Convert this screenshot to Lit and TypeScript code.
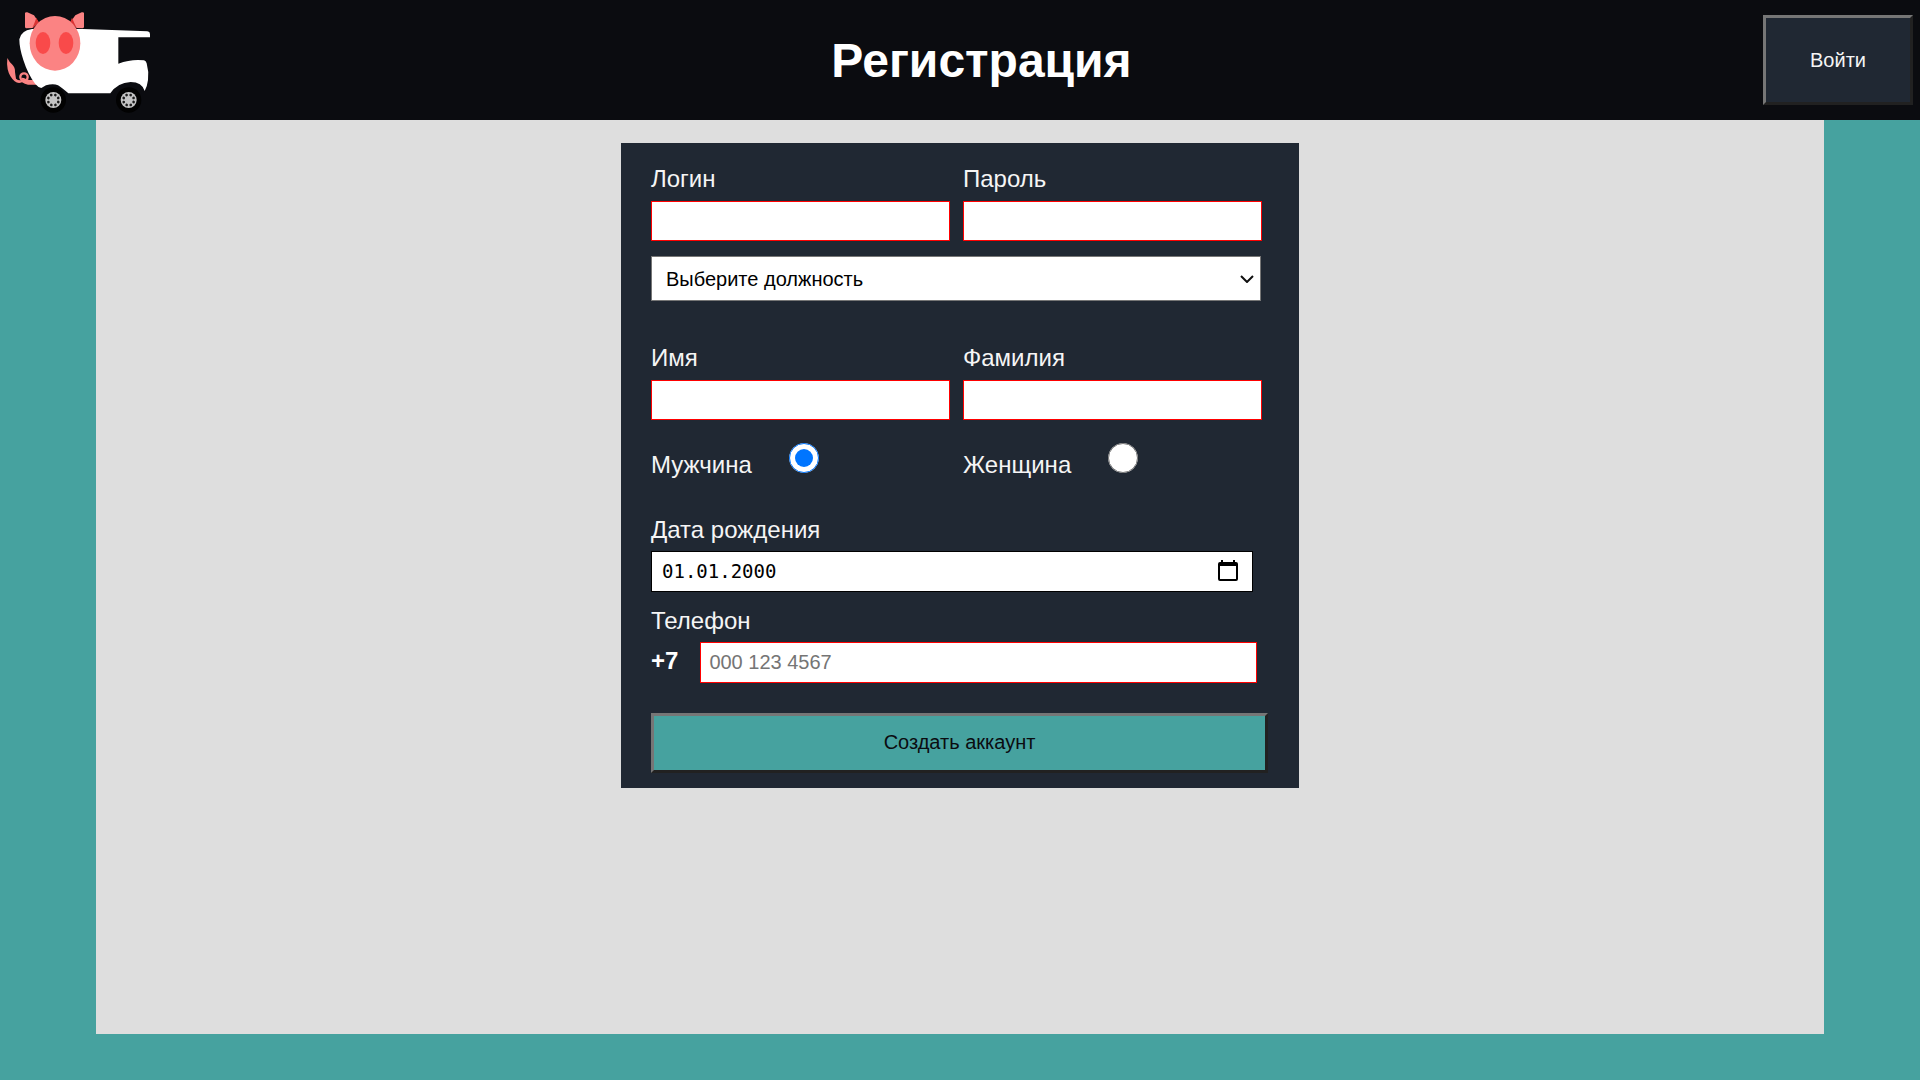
import { LitElement, html, css, svg } from "lit";
import { customElement } from "lit/decorators.js";

const wheel = (cx: number) => svg`
  <circle cx=${cx} cy="300" r="38" fill="#020202" />
  <circle cx=${cx} cy="300" r="24" fill="#c4c4c4" />
  ${[22, 67, 112, 157, 202, 247, 292, 337].map(
    (a) => svg`<circle cx=${cx} cy="284" r="4" fill="#1c1c1c"
      transform="rotate(${a} ${cx} 300)" />`
  )}`;

@customElement("pig-van-logo")
export class PigVanLogo extends LitElement {
  static styles = css`
    :host {
      display: block;
    }
    .art {
      display: block;
      width: 150px;
      height: 120px;
    }
  `;

  render() {
    return html`
      <svg class="art" viewBox="0 0 450 360" aria-hidden="true">
        <path
          d="M22 174 Q28 186 36 193 Q46 203 45 216 L48 236 Q56 243 66 240 Q78 236 88 240 L108 240 L110 254 L84 254 Q74 252 66 247 Q54 252 44 244 Q28 230 23 208 Q20 192 22 174 Z"
          fill="#fb8383"
        />
        <circle cx="72" cy="231" r="11" fill="#0b0c10" stroke="#fb8383" stroke-width="7" />
        <path d="M66 236 Q76 236 84 246" fill="none" stroke="#fb8383" stroke-width="5" />
        <path
          d="M96 87 L250 87 L442 94 Q450 95 450 102 L450 112 L355 112 L355 191 Q395 176 432 181 Q438 182 440 190 Q447 215 444 240 Q442 258 434 273 Q426 246 392 246 Q352 248 331 280 L205 280 Q184 262 174 256 Q160 249 138 256 L124 264 Q114 262 106 252 Q84 224 70 180 Q58 144 58 118 Q62 92 96 87 Z"
          fill="#ffffff"
        />
        <path d="M75 38 Q77 36 82 37 L102 46 L116 67 L98 84 L78 85 Q75 84 75 80 Z" fill="#fb8383" />
        <path d="M252 38 Q250 36 245 37 L226 46 L211 67 L230 84 L248 85 Q252 84 252 80 Z" fill="#fb8383" />
        <path d="M109 53 L117 68 L97 84 Q104 68 109 53 Z" fill="#d93434" />
        <path d="M216 53 L210 68 L230 84 Q222 68 216 53 Z" fill="#d93434" />
        <ellipse cx="165" cy="130" rx="76" ry="82" fill="#fb8383" />
        <ellipse cx="129" cy="129" rx="22" ry="33" fill="#f94a4a" />
        <ellipse cx="198" cy="129" rx="22" ry="33" fill="#f94a4a" />
        ${wheel(160)} ${wheel(386)}
      </svg>
    `;
  }
}

@customElement("app-root")
export class AppRoot extends LitElement {
  static styles = css`
    :host {
      display: flex;
      flex-direction: column;
      min-height: 100vh;
      background: #46a29f;
      font-family: "Liberation Sans", Arial, sans-serif;
      color: #f5f5f5;
    }
    *,
    *::before {
      box-sizing: border-box;
    }
    .header {
      display: flex;
      align-items: center;
      justify-content: space-between;
      height: 120px;
      padding-right: 7px;
      background: #0b0c10;
    }
    .brand {
      width: 200px;
    }
    .title {
      margin: 0;
      padding-top: 2px;
      font-size: 48px;
      line-height: 56px;
      color: #ffffff;
    }
    .button {
      border: 3px solid;
      border-color: #767676 #212121 #212121 #767676;
      border-radius: 0;
      padding: 0;
      font: 20px "Liberation Sans", Arial, sans-serif;
      cursor: pointer;
    }
    .login {
      width: 150px;
      height: 90px;
      background: #202833;
      color: #f5f5f5;
    }
    .page {
      flex: 1;
      margin: 0 5% 46px;
      padding-top: 23px;
      background: #dedede;
    }
    .form {
      display: flex;
      flex-direction: column;
      width: min(100%, 678px);
      margin: 0 auto;
      padding: 22px 31px 15px 30px;
      background: #202833;
    }
    .pair {
      display: grid;
      grid-template-columns: 1fr 1fr;
      column-gap: 13px;
      margin-right: 6px;
    }
    .field {
      display: flex;
      flex-direction: column;
      gap: 8px;
    }
    .label {
      font-size: 24px;
      line-height: 28px;
    }
    .input {
      width: 100%;
      height: 40px;
      padding: 0 8px 1px;
      border: 1px solid #ff0000;
      border-radius: 0;
      background: #ffffff;
      color: #000000;
      font: 20px "Liberation Sans", Arial, sans-serif;
    }
    .input::placeholder {
      color: #757575;
    }
    .position {
      display: grid;
      grid-template-columns: 1fr auto;
      align-items: center;
      margin: 15px 7px 43px 0;
    }
    .select {
      grid-area: 1 / 1 / 2 / 3;
      height: 45px;
      padding: 0 30px 0 14px;
      border: 1px solid #767676;
      border-radius: 0;
      appearance: none;
      background: #ffffff;
      color: #000000;
      font: 20px "Liberation Sans", Arial, sans-serif;
    }
    .chevron {
      grid-area: 1 / 2 / 2 / 3;
      width: 14px;
      height: 8px;
      margin-right: 7px;
      pointer-events: none;
    }
    .choices {
      margin-top: 23px;
      margin-bottom: 37px;
    }
    .choice {
      display: flex;
      align-items: baseline;
      gap: 37px;
    }
    .radio {
      width: 30px;
      height: 30px;
      margin: 0;
    }
    .date {
      display: flex;
      align-items: center;
      height: 41px;
      margin: 7px 15px 15px 0;
      padding-right: 14px;
      border: 1px solid #000000;
      background: #ffffff;
    }
    .date-input {
      flex: 1;
      min-width: 0;
      height: 39px;
      padding: 0 10px 2px;
      border: 0;
      background: none;
      color: #000000;
      font: 19px "DejaVu Sans Mono", monospace;
    }
    .picker {
      display: flex;
      padding: 0 0 1px;
      border: 0;
      background: none;
      cursor: pointer;
    }
    .calendar {
      width: 20px;
      height: 22px;
    }
    .phone {
      display: flex;
      align-items: baseline;
      gap: 22px;
      margin: 7px 11px 30px 0;
    }
    .code {
      font-size: 24px;
      line-height: 28px;
      font-weight: bold;
      color: #ffffff;
    }
    .phone-input {
      flex: 1;
      min-width: 0;
      height: 41px;
    }
    .submit {
      height: 60px;
      padding-bottom: 2px;
      background: #46a29f;
      color: #0b0c10;
    }
  `;

  private textField(id: string, label: string, type = "text") {
    return html`
      <div class="field">
        <label class="label" for=${id}>${label}</label>
        <input class="input" id=${id} name=${id} type=${type} required />
      </div>
    `;
  }

  private choice(id: string, label: string, checked: boolean) {
    return html`
      <div class="choice">
        <label class="label" for=${id}>${label}</label>
        <input class="radio" id=${id} name="gender" type="radio" value=${id} ?checked=${checked} />
      </div>
    `;
  }

  render() {
    return html`
      <header class="header">
        <pig-van-logo class="brand"></pig-van-logo>
        <h1 class="title">Регистрация</h1>
        <button class="button login" type="button">Войти</button>
      </header>
      <main class="page">
        <form class="form" @submit=${(e: Event) => e.preventDefault()}>
          <div class="pair">
            ${this.textField("login", "Логин")} ${this.textField("password", "Пароль", "password")}
          </div>
          <div class="position">
            <select class="select" name="position" aria-label="Выберите должность">
              <option>Выберите должность</option>
            </select>
            <svg class="chevron" viewBox="0 0 14 8" aria-hidden="true">
              <path d="M1 1L7 7L13 1" fill="none" stroke="#101010" stroke-width="2" />
            </svg>
          </div>
          <div class="pair">
            ${this.textField("name", "Имя")} ${this.textField("surname", "Фамилия")}
          </div>
          <div class="pair choices">
            ${this.choice("male", "Мужчина", true)} ${this.choice("female", "Женщина", false)}
          </div>
          <label class="label" for="birthday">Дата рождения</label>
          <div class="date">
            <input class="date-input" id="birthday" name="birthday" type="text" inputmode="numeric" value="01.01.2000" />
            <button class="picker" type="button" aria-label="Календарь">
              <svg class="calendar" viewBox="0 0 20 22" aria-hidden="true">
                <path d="M3 0H5V2H15V0H17V2H18Q20 2 20 4V19Q20 21 18 21H2Q0 21 0 19V4Q0 2 2 2H3ZM2 6V19H18V6Z" fill="#000000" fill-rule="evenodd" />
              </svg>
            </button>
          </div>
          <label class="label" for="phone">Телефон</label>
          <div class="phone">
            <span class="code">+7</span>
            <input class="input phone-input" id="phone" name="phone" type="tel" placeholder="000 123 4567" required />
          </div>
          <button class="button submit" type="submit">Создать аккаунт</button>
        </form>
      </main>
    `;
  }
}
